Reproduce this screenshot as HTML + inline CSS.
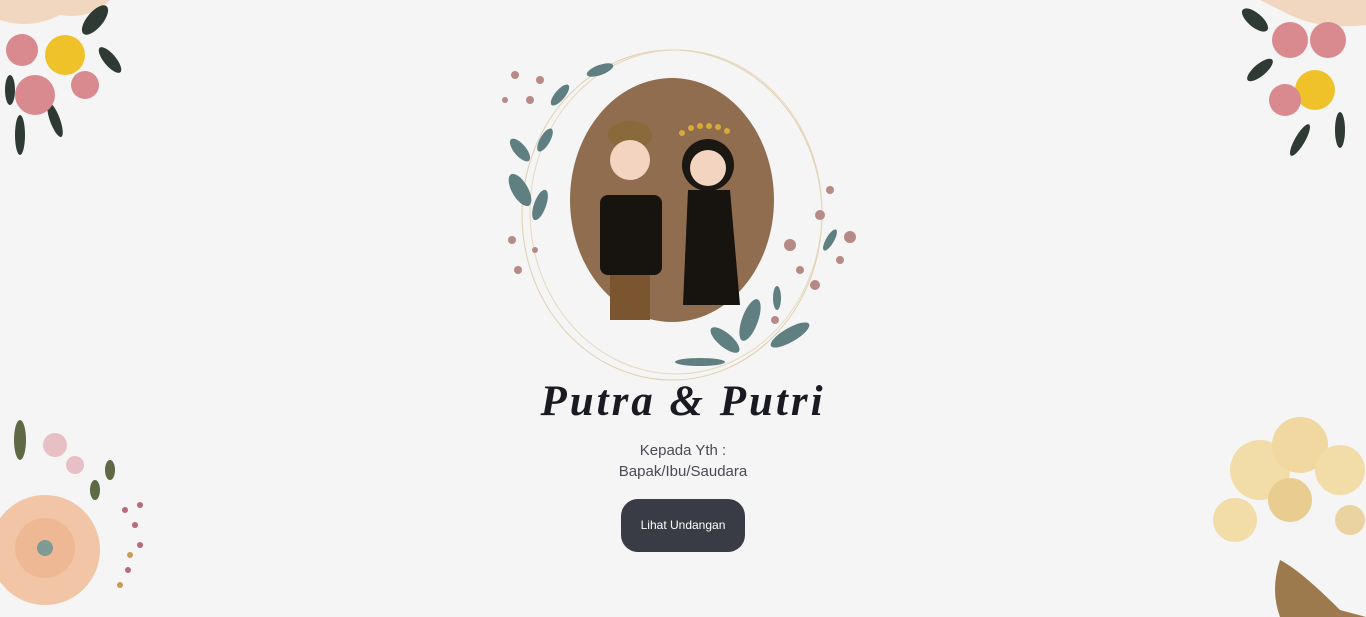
<!DOCTYPE html>
<html><head><meta charset="utf-8"><style>
html,body{margin:0;padding:0;width:1366px;height:617px;overflow:hidden;background:#f5f5f5;font-family:"Liberation Sans",sans-serif;}
.abs{position:absolute}
h1{position:absolute;left:0;width:1366px;text-align:center;top:377px;margin:0;font-family:"Liberation Serif",serif;font-style:italic;font-weight:bold;font-size:43px;letter-spacing:3px;color:#1a1a22;}
.t{position:absolute;left:0;width:1366px;text-align:center;font-size:15px;color:#4a4a55;}
.btn{position:absolute;left:621px;top:499px;width:124px;height:53px;border-radius:17px;background:#393c44;color:#fff;font-size:12px;line-height:53px;text-align:center;}
</style></head><body>
<svg class="abs" style="left:0;top:0" width="1366" height="617">
<!-- center wreath -->
<ellipse cx="672" cy="215" rx="150" ry="165" fill="none" stroke="#e0cfae" stroke-width="1"/>
<ellipse cx="676" cy="212" rx="146" ry="162" fill="none" stroke="#e6d8bd" stroke-width="1"/>
<ellipse cx="672" cy="200" rx="102" ry="122" fill="#8f6d4e"/>
<g fill="#5f7f80">
<ellipse cx="520" cy="190" rx="8" ry="18" transform="rotate(-30 520 190)"/>
<ellipse cx="540" cy="205" rx="6" ry="16" transform="rotate(20 540 205)"/>
<ellipse cx="520" cy="150" rx="6" ry="14" transform="rotate(-40 520 150)"/>
<ellipse cx="545" cy="140" rx="5" ry="13" transform="rotate(30 545 140)"/>
<ellipse cx="560" cy="95" rx="5" ry="13" transform="rotate(40 560 95)"/>
<ellipse cx="600" cy="70" rx="5" ry="14" transform="rotate(70 600 70)"/>
<ellipse cx="750" cy="320" rx="8" ry="22" transform="rotate(20 750 320)"/>
<ellipse cx="725" cy="340" rx="7" ry="18" transform="rotate(-50 725 340)"/>
<ellipse cx="790" cy="335" rx="7" ry="22" transform="rotate(60 790 335)"/>
<ellipse cx="777" cy="298" rx="4" ry="12"/>
<ellipse cx="830" cy="240" rx="4" ry="12" transform="rotate(30 830 240)"/>
<ellipse cx="700" cy="362" rx="25" ry="4"/>
</g>
<g fill="#b88a85">
<circle cx="515" cy="75" r="4"/><circle cx="530" cy="100" r="4"/><circle cx="540" cy="80" r="4"/><circle cx="505" cy="100" r="3"/>
<circle cx="512" cy="240" r="4"/><circle cx="518" cy="270" r="4"/><circle cx="535" cy="250" r="3"/>
<circle cx="850" cy="237" r="6"/><circle cx="820" cy="215" r="5"/><circle cx="830" cy="190" r="4"/><circle cx="790" cy="245" r="6"/>
<circle cx="815" cy="285" r="5"/><circle cx="800" cy="270" r="4"/><circle cx="840" cy="260" r="4"/><circle cx="775" cy="320" r="4"/>
</g>
<!-- couple -->
<ellipse cx="630" cy="135" rx="22" ry="14" fill="#8a6a3a"/>
<circle cx="630" cy="160" r="20" fill="#f3d4c0"/>
<rect x="600" y="195" width="62" height="80" rx="8" fill="#17130f"/>
<rect x="610" y="275" width="40" height="45" fill="#7a5530"/>
<circle cx="708" cy="165" r="26" fill="#1b1713"/>
<circle cx="708" cy="168" r="18" fill="#f3d4c0"/>
<path d="M688 190 L730 190 L740 305 L683 305 Z" fill="#17130f"/>
<g fill="#d7a93a"><circle cx="682" cy="133" r="3"/><circle cx="691" cy="128" r="3"/><circle cx="700" cy="126" r="3"/><circle cx="709" cy="126" r="3"/><circle cx="718" cy="127" r="3"/><circle cx="727" cy="131" r="3"/></g>
<!-- top-left flowers -->
<g>
<path d="M0 0 L110 0 Q90 20 60 15 Q30 30 0 20 Z" fill="#f1d7c0"/>
<g fill="#2e3a33"><ellipse cx="95" cy="20" rx="8" ry="18" transform="rotate(40 95 20)"/><ellipse cx="110" cy="60" rx="6" ry="16" transform="rotate(-40 110 60)"/><ellipse cx="20" cy="135" rx="5" ry="20"/><ellipse cx="55" cy="120" rx="5" ry="18" transform="rotate(-20 55 120)"/><ellipse cx="10" cy="90" rx="5" ry="15"/></g>
<circle cx="22" cy="50" r="16" fill="#d98a8f"/><circle cx="65" cy="55" r="20" fill="#f0c22a"/><circle cx="35" cy="95" r="20" fill="#d98a8f"/><circle cx="85" cy="85" r="14" fill="#d98a8f"/>
</g>
<!-- top-right flowers -->
<g>
<path d="M1260 0 L1366 0 L1366 25 Q1320 30 1290 15 Z" fill="#f1d7c0"/>
<g fill="#2e3a33"><ellipse cx="1255" cy="20" rx="7" ry="16" transform="rotate(-50 1255 20)"/><ellipse cx="1260" cy="70" rx="6" ry="16" transform="rotate(50 1260 70)"/><ellipse cx="1300" cy="140" rx="5" ry="18" transform="rotate(30 1300 140)"/><ellipse cx="1340" cy="130" rx="5" ry="18"/></g>
<circle cx="1290" cy="40" r="18" fill="#d98a8f"/><circle cx="1328" cy="40" r="18" fill="#d98a8f"/><circle cx="1315" cy="90" r="20" fill="#f0c22a"/><circle cx="1285" cy="100" r="16" fill="#d98a8f"/>
</g>
<!-- bottom-left flowers -->
<g>
<g fill="#5d6a45"><ellipse cx="20" cy="440" rx="6" ry="20"/><ellipse cx="110" cy="470" rx="5" ry="10"/><ellipse cx="95" cy="490" rx="5" ry="10"/></g>
<circle cx="55" cy="445" r="12" fill="#e8bfc4"/><circle cx="75" cy="465" r="9" fill="#e8bfc4"/>
<circle cx="45" cy="550" r="55" fill="#f2c5a7"/><circle cx="45" cy="548" r="30" fill="#efb894"/><circle cx="45" cy="548" r="8" fill="#7d9a95"/>
<g fill="#b66a7a"><circle cx="125" cy="510" r="3"/><circle cx="135" cy="525" r="3"/><circle cx="140" cy="545" r="3"/><circle cx="128" cy="570" r="3"/><circle cx="140" cy="505" r="3"/></g>
<g fill="#c89a55"><circle cx="130" cy="555" r="3"/><circle cx="120" cy="585" r="3"/></g>
</g>
<!-- bottom-right dried flower -->
<g>
<path d="M1280 560 Q1300 570 1340 610 L1366 617 L1280 617 Q1270 590 1280 560 Z" fill="#9c7a4e"/>
<circle cx="1260" cy="470" r="30" fill="#f2dca8"/><circle cx="1300" cy="445" r="28" fill="#f0d8a0"/><circle cx="1340" cy="470" r="25" fill="#f2dca8"/><circle cx="1235" cy="520" r="22" fill="#f2dca8"/><circle cx="1290" cy="500" r="22" fill="#e8cc90"/><circle cx="1350" cy="520" r="15" fill="#ead3a0"/>
</g>
</svg>
<h1>Putra &amp; Putri</h1>
<div class="t" style="top:442px">Kepada Yth :</div>
<div class="t" style="top:463px">Bapak/Ibu/Saudara</div>
<div class="btn">Lihat Undangan</div>
</body></html>
